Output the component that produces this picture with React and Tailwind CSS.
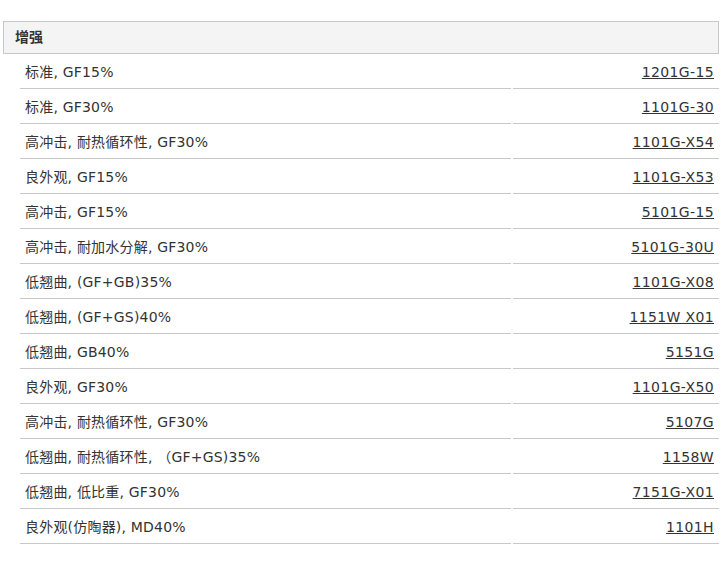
import React from "react";

const rows = [
  ["标准, GF15%", "1201G-15"],
  ["标准, GF30%", "1101G-30"],
  ["高冲击, 耐热循环性, GF30%", "1101G-X54"],
  ["良外观, GF15%", "1101G-X53"],
  ["高冲击, GF15%", "5101G-15"],
  ["高冲击, 耐加水分解, GF30%", "5101G-30U"],
  ["低翘曲, (GF+GB)35%", "1101G-X08"],
  ["低翘曲, (GF+GS)40%", "1151W X01"],
  ["低翘曲, GB40%", "5151G"],
  ["良外观, GF30%", "1101G-X50"],
  ["高冲击, 耐热循环性, GF30%", "5107G"],
  ["低翘曲, 耐热循环性, （GF+GS)35%", "1158W"],
  ["低翘曲, 低比重, GF30%", "7151G-X01"],
  ["良外观(仿陶器), MD40%", "1101H"],
];

export default function App() {
  return (
    <div
      className="w-[721px] h-[562px] bg-white pt-[21px] pl-[3px] text-[14px] text-[#333333]"
      style={{ fontFamily: '"DejaVu Sans", "Noto Sans CJK SC", sans-serif' }}
    >
      <div className="w-[716px] h-[33px] border border-[#c8c8c8] bg-[#f4f4f4] flex items-center pl-[11px] font-bold">
        增强
      </div>
      <div className="ml-[17px] flex flex-col">
        {rows.map(([name, code]) => (
          <div key={code} className="flex gap-[2px]">
            <div className="w-[491px] h-[35px] border-b border-[#c8c8c8] flex items-center pl-[5px] pt-[3px] whitespace-nowrap tracking-[0.2px]">
              {name}
            </div>
            <div className="w-[206px] h-[35px] border-b border-[#c8c8c8] flex items-center justify-end pr-[5px] pt-[3px]">
              <a href="#" className="underline text-[#333333] tracking-[0.35px]">
                {code}
              </a>
            </div>
          </div>
        ))}
      </div>
    </div>
  );
}
